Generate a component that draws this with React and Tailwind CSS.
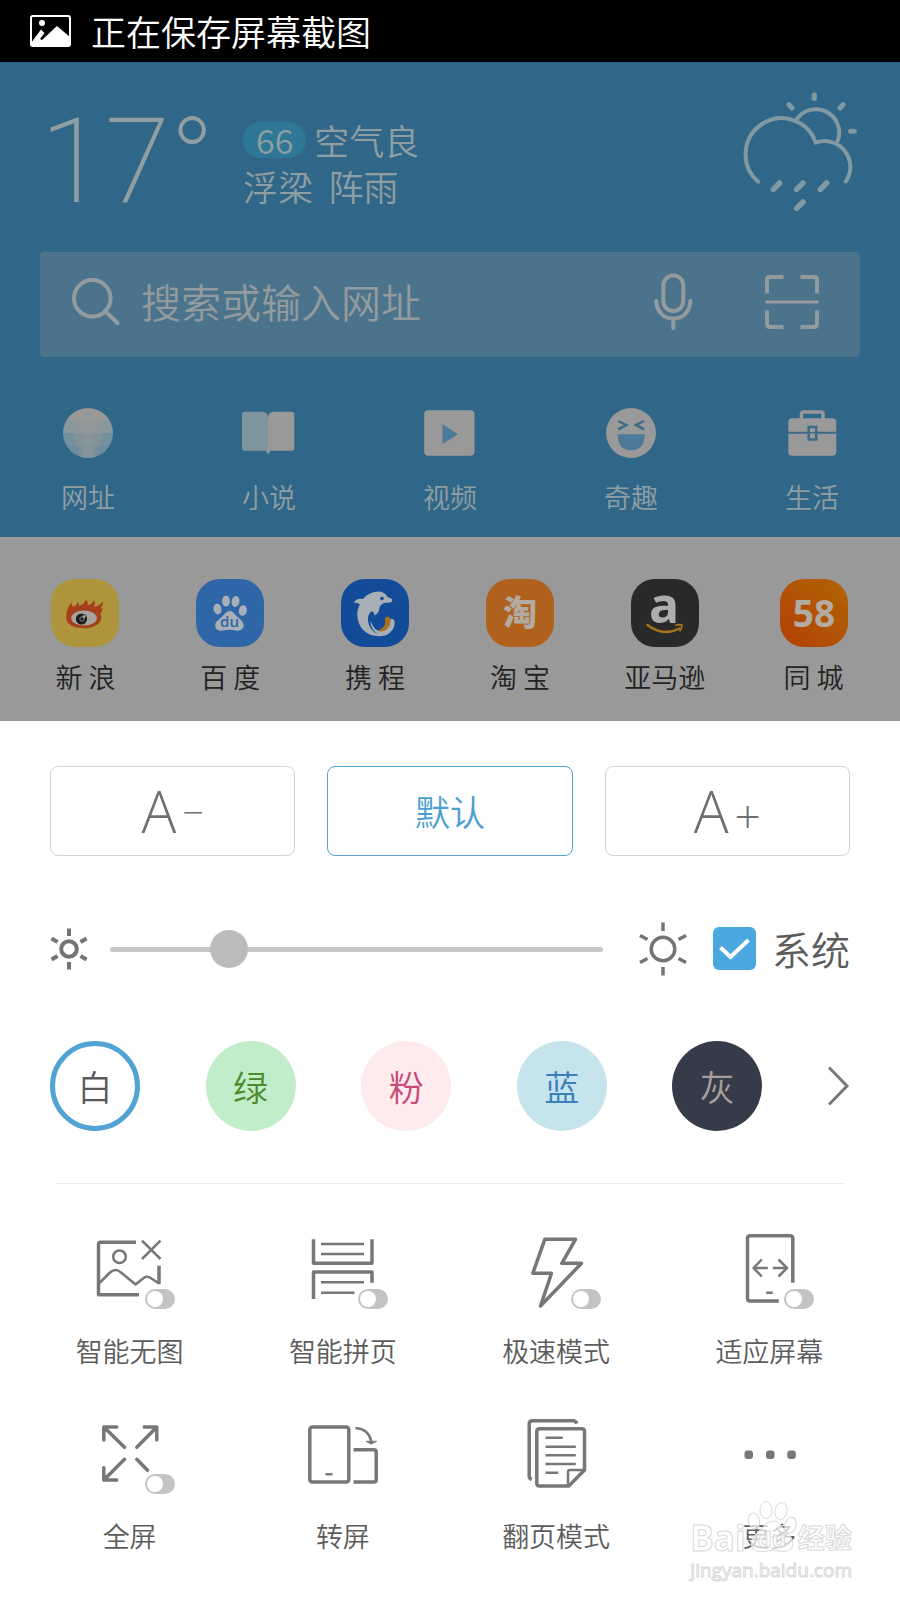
import React from 'react';

const WeatherIcon = () => (
  <svg width="120" height="124" viewBox="0 0 120 124" fill="none" stroke="#8199a3" strokeWidth="4" strokeLinecap="round">
    <path d="M18.3 91.7A36 36 0 1 1 75.7 52.7A25.8 25.8 0 0 1 105.7 91.7" strokeLinejoin="round" />
    <path d="M56.7 29.3A23.3 23.3 0 0 1 97.7 50.7" />
    <path d="M74.3 4.8V8.5M49 14.6L52 18M103 14.6L100 18M110.5 41.3H114.2" strokeWidth="5" />
    <path d="M39.6 93L33.4 99.4M63 93L56.6 99.4M86.6 93L80.4 99.4M63 112L56.6 118.4" strokeWidth="5.5" />
  </svg>
);

const SearchIcon = () => (
  <svg width="50" height="50" viewBox="0 0 50 50" fill="none" stroke="#949b9e" strokeWidth="4" strokeLinecap="round">
    <circle cx="20.3" cy="21.3" r="18.3" />
    <path d="M33.5 34.5L45.5 46" />
  </svg>
);

const MicIcon = () => (
  <svg width="40" height="58" viewBox="0 0 40 58" fill="none" stroke="#949b9e" strokeWidth="4" strokeLinecap="round">
    <rect x="10.3" y="2.5" width="20" height="35.5" rx="10" />
    <path d="M3.2 28C4 39.5 11 45.5 20.3 45.5S36.6 39.5 37.4 28M20.3 46V55" />
  </svg>
);

const ScanIcon = () => (
  <svg width="54" height="54" viewBox="0 0 54 54" fill="none" stroke="#949b9e" strokeWidth="4">
    <path d="M2 18.5V5Q2 2 5 2H18.5M35.5 2H49Q52 2 52 5V18.5M52 35.5V49Q52 52 49 52H35.5M18.5 52H5Q2 52 2 49V35.5" />
    <path d="M1.5 27H52.5" strokeWidth="3" strokeLinecap="round" />
  </svg>
);

const navs = [
  {
    label: '网址',
    icon: (
      <>
        <defs>
          <clipPath id="globe">
            <circle cx="27" cy="26" r="25" />
          </clipPath>
        </defs>
        <g clipPath="url(#globe)">
          <rect width="54" height="14" fill="#979999" />
          <rect y="14" width="54" height="12" fill="#8a979b" />
          <rect y="26" width="54" height="13" fill="#75909d" />
          <rect y="39" width="54" height="13" fill="#6c8b9b" />
          <path d="M13 14H41V26Q40 42 33 52H21Q14 42 13 26Z" fill="#999" opacity=".35" />
          <path d="M22 14H32V52H22Z" fill="#999" opacity=".35" />
        </g>
      </>
    )
  },
  {
    label: '小说',
    icon: (
      <>
        <path d="M0 7.5Q0 4.7 2.8 4.7H20Q26 4.7 26 11V47.5L23.5 43.7H2.8Q0 43.7 0 41Z" fill="#7e959f" />
        <path d="M52.3 7.5Q52.3 4.7 49.5 4.7H32Q26 4.7 26 11V47.5L28.5 43.7H49.5Q52.3 43.7 52.3 41Z" fill="#999" />
      </>
    )
  },
  {
    label: '视频',
    icon: (
      <>
        <rect x="1.2" y="3.3" width="50.3" height="45.4" rx="4" fill="#999" />
        <path d="M19.5 17.3L35 27.2L19.5 37Z" fill="#4b7b98" />
      </>
    )
  },
  {
    label: '奇趣',
    icon: (
      <>
        <circle cx="27" cy="26" r="25" fill="#999" />
        <path d="M14.3 14L22.3 18L14.3 22.3M40 14L32 18L40 22.3" fill="none" stroke="#3d6c88" strokeWidth="2.5" />
        <path d="M13.7 27.3H40.7Q40.7 43.3 27.2 43.3T13.7 27.3Z" fill="#4b7b98" />
      </>
    )
  },
  {
    label: '生活',
    icon: (
      <>
        <path d="M16.5 12V7Q16.5 5 18.5 5H36Q38 5 38 7V12" fill="none" stroke="#999" strokeWidth="3.5" />
        <rect x="3.3" y="11.3" width="48" height="37.4" rx="4" fill="#999" />
        <path d="M3 25.7H51.5" stroke="#3d6c88" strokeWidth="2" />
        <rect x="23.7" y="20" width="7.5" height="12.5" fill="#999" stroke="#3d6c88" strokeWidth="2.5" />
        <path d="M25 25.7H30" stroke="#3d6c88" strokeWidth="1.5" />
      </>
    )
  }
];

const sites = [
  {
    label: '新 浪',
    tile: 'bg-[#ae943c]',
    icon: (
      <>
        <path d="M15.5 41C14.5 34 17 27 20.5 23.5Q20.5 27 22 28Q26 26 27 23Q28.5 25 28 27Q33.5 25 35 20.5Q37.5 23.5 36.5 26.5Q41 25.5 43 21.5Q45 24.5 43 28Q48 27 52 22.5Q52.5 26 49.5 29.5Q52 29.5 52 29Q51 33 49.5 35Q52 41 46.5 45.5Q40 50 30 49Q17.5 48 15.5 41Z" fill="#a5401b" />
        <ellipse cx="33" cy="39" rx="12.8" ry="7.5" fill="#a8a5a0" />
        <circle cx="30.5" cy="40" r="5.6" fill="#1c1c1c" />
        <circle cx="31" cy="40" r="2.2" fill="none" stroke="#888" />
        <circle cx="33" cy="37.5" r="1.5" fill="#a8a5a0" />
      </>
    )
  },
  {
    label: '百 度',
    tile: 'bg-[#2f66a8]',
    icon: (
      <>
        <g fill="#a9afb6">
          <ellipse cx="30" cy="22" rx="3.9" ry="5.5" />
          <ellipse cx="39.5" cy="22.5" rx="3.9" ry="5.5" transform="rotate(10 39.5 22.5)" />
          <ellipse cx="21.5" cy="30" rx="4" ry="5.3" transform="rotate(-12 21.5 30)" />
          <ellipse cx="46.8" cy="31.5" rx="4" ry="5.3" transform="rotate(12 46.8 31.5)" />
          <path d="M34 32Q37 32 39 35.5L45 41Q49 45 47 49Q44.500 52.500 40 51.500Q33.500 50 27 51.500Q21.500 52.500 19.500 48.500Q18 43.500 23 40.500Q26 38 28.500 35Q31 32 34 32Z" />
        </g>
        <text x="33.5" y="48" textAnchor="middle" fontFamily="'Open Sans', sans-serif" fontSize="15" fontWeight="600" fill="#2f66a8">du</text>
      </>
    )
  },
  {
    label: '携 程',
    tile: 'bg-[#124c99]',
    icon: (
      <>
        <path d="M13 24Q15 19 22 20Q28 12.5 38 12.5Q44 13 46.5 18L51 20Q52 23 49 23.5L43 24Q39 26 38.5 29Q38 34.5 33 36.5Q33.5 32 30 32.5Q26.5 36 27 42Q28 51 37 55Q29 50 29.5 42Q33 52 40 52Q48 51 49 41Q51 38 53.5 42Q54.5 49 48.5 54Q42 59 32 56.5Q19 53 16.5 39Q15.5 31 19 25.5Q16 23 13 24Z" fill="#a9afb6" />
        <path d="M44 39Q47 36 49 39Q51 46 45 51Q41 53.5 37 51.5Q43 49 44 45Z" fill="#a9701e" />
        <circle cx="41" cy="19.5" r="1.8" fill="#124c99" />
      </>
    )
  },
  {
    label: '淘 宝',
    tile: 'bg-[#b0611d]',
    icon: (
      <text x="34" y="46" textAnchor="middle" fontFamily="'Noto Sans CJK SC', sans-serif" fontSize="34" fontWeight="900" fill="#b3aaa0">淘</text>
    )
  },
  {
    label: '亚马逊',
    tile: 'bg-[#292929]',
    icon: (
      <>
        <text x="33" y="44" textAnchor="middle" fontFamily="'Open Sans', sans-serif" fontSize="50" fontWeight="700" fill="#adadad">a</text>
        <path d="M16.5 46Q32 58 48.5 49.5" fill="none" stroke="#a8741c" strokeWidth="2.5" strokeLinecap="round" />
        <path d="M44 46.5Q48 45 51 46Q51 49.5 48.5 52.5" fill="none" stroke="#a8741c" strokeWidth="1.8" />
      </>
    )
  },
  {
    label: '同 城',
    tile: 'bg-linear-to-tr from-[#b23f05] to-[#b06404]',
    icon: (
      <text x="34" y="48" textAnchor="middle" fontFamily="'Open Sans', sans-serif" fontSize="37" fontWeight="700" fill="#b3aaa2">58</text>
    )
  }
];

const themes = [
  { label: '白', style: 'border-5 border-[#51a3d3] bg-white text-[#5a5a5a]' },
  { label: '绿', style: 'bg-[#c2edcb] text-[#4b8b2b]' },
  { label: '粉', style: 'bg-[#fdebee] text-[#c94a76]' },
  { label: '蓝', style: 'bg-[#c5e4ec] text-[#3b7fbc]' },
  { label: '灰', style: 'bg-[#353b49] text-[#a79f9c]' }
];

const tools = [
  {
    label: '智能无图',
    toggle: true,
    icon: (
      <>
        <path d="M54 13.3H18.5Q16.5 13.3 16.5 15.3V65.7H57M77 36.7V55" strokeWidth="3.5" />
        <circle cx="37.5" cy="27.7" r="6.3" />
        <path d="M17 54.5L28 43.5Q33.5 38.5 39 43.5L53.5 55.5L61 49.5Q65 46 69.5 49.5L77 54.5M60 11.7L78.5 30M78.5 11.7L60 30" strokeWidth="2.5" />
      </>
    )
  },
  {
    label: '智能拼页',
    toggle: true,
    icon: (
      <>
        <path d="M18.5 10.3V34.3H77V10.3M18.5 70V43H77V53.7" strokeWidth="3.5" />
        <path d="M26 15H69M26 25H69M26 53.3H69M26 63.7H59.5" strokeWidth="2.5" />
      </>
    )
  },
  {
    label: '极速模式',
    toggle: true,
    icon: (
      <path d="M36.8 10.3H67.5L53.8 34.3H73.5L32.5 77L43.5 44.3H24.8Z" strokeWidth="3.5" />
    )
  },
  {
    label: '适应屏幕',
    toggle: true,
    icon: (
      <>
        <path d="M71.8 53.7V9.5Q71.8 6.7 69 6.7H29.3Q26.5 6.7 26.5 9.5V69.2Q26.5 72 29.3 72H57.8" strokeWidth="3.5" />
        <path d="M46.8 39H32.5M40.8 30.5L32.5 39L40.8 47.5M51.8 39H66M57.5 30.5L66 39L57.5 47.5M45.2 63.7H51.8" strokeWidth="2.5" />
      </>
    )
  },
  {
    label: '全屏',
    toggle: true,
    icon: (
      <path d="M42.5 33.3L21.8 13M34.8 13H21.8V26M54.8 33.3L74.8 13M62.2 13H74.8V26M42.5 45.3L21.8 66M34.8 66H21.8V53.7M54.8 45.3L65.5 56.3" strokeWidth="3.5" strokeLinecap="round" />
    )
  },
  {
    label: '转屏',
    icon: (
      <>
        <rect x="14.8" y="13" width="39" height="55" rx="2.5" strokeWidth="3.5" />
        <path d="M58.5 35.7H79Q81.2 35.7 81.2 38V65.7Q81.2 68 79 68H58.5" strokeWidth="3.5" />
        <path d="M30.5 60.3H37.5M60.5 14Q73.5 15 76.2 27" strokeWidth="2.5" />
        <path d="M71 27.3H81.5L76.2 30Z" fill="#777" strokeWidth="1" />
      </>
    )
  },
  {
    label: '翻页模式',
    icon: (
      <>
        <path d="M69 9.5Q67.5 6.7 65 6.7H24.5Q21.2 6.7 21.2 10V62.5Q21.2 64.5 23.8 65.5" strokeWidth="3.5" />
        <path d="M60.8 72H31.5Q28.8 72 28.8 69.2V17.5Q28.8 14.7 31.5 14.7H73.7Q76.5 14.7 76.5 17.5V56Z" strokeWidth="3.5" />
        <path d="M60 71V58Q60 56 62 56H76" strokeWidth="2.5" />
        <path d="M37.5 23.7H54.8M37.5 32.7H67.8M37.5 41.3H67.8M37.5 50H67.8M37.5 58.7H50.2" strokeWidth="2.5" />
      </>
    )
  },
  {
    label: '更多',
    icon: (
      <g fill="#777" stroke="none">
        <rect x="23.5" y="36.5" width="8.5" height="8.5" rx="3" />
        <rect x="45" y="36.5" width="8.5" height="8.5" rx="3" />
        <rect x="66.3" y="36.5" width="8.5" height="8.5" rx="3" />
      </g>
    )
  }
];

const ToolIcon = ({ children }) => (
  <svg width="96" height="84" viewBox="0 0 96 84" fill="none" stroke="#777" strokeWidth="2.5" strokeLinejoin="round">
    {children}
  </svg>
);

const Tool = ({ label, icon, toggle }) => {
  if (!toggle) {
    return (
      <button type="button" className="flex flex-col items-center gap-5">
        <ToolIcon>{icon}</ToolIcon>
        <span>{label}</span>
      </button>
    );
  }
  return (
    <label className="flex flex-col items-center gap-5">
      <span className="relative">
        <ToolIcon>{icon}</ToolIcon>
        <input
          type="checkbox"
          className="absolute right-[3px] bottom-1 h-5 w-[30px] appearance-none rounded-full bg-[#c3c3c3] before:absolute before:top-0.5 before:left-0.5 before:size-4 before:rounded-full before:bg-white"
        />
      </span>
      <span>{label}</span>
    </label>
  );
};

const Watermark = () => (
  <div className="pointer-events-none absolute right-12 bottom-[18px] font-['Open_Sans','Noto_Sans_CJK_SC',sans-serif] text-white/70 [-webkit-text-stroke:1px_#d9d9d9]">
    <div className="flex items-end">
      <span className="text-[35px] leading-10 font-bold">Bai</span>
      <svg width="52" height="54" viewBox="0 0 52 54" fill="#fff" fillOpacity=".7" stroke="#d9d9d9" className="mb-1">
        <ellipse cx="20" cy="10" rx="6" ry="8.5" />
        <ellipse cx="35" cy="11" rx="6" ry="8.5" transform="rotate(10 35 11)" />
        <ellipse cx="8" cy="21" rx="5.5" ry="8" transform="rotate(-12 8 21)" />
        <ellipse cx="44.5" cy="25" rx="5.5" ry="8" transform="rotate(12 44.5 25)" />
        <path d="M27 21Q33 21 37 28L45 37Q49 44 45 49Q40 53 34 51Q27 49 20 51Q12 53 7 49Q3 43 8 36L17 27Q21 21 27 21Z" />
        <text x="26" y="47" textAnchor="middle" fontSize="22" fontWeight="700">du</text>
      </svg>
      <span className="text-[27px] leading-10 font-bold">经验</span>
    </div>
    <div className="text-[19px] leading-6 font-normal">jingyan.baidu.com</div>
  </div>
);

const App = () => (
  <div className="relative min-h-screen bg-white font-['Noto_Sans_CJK_SC',sans-serif] font-[350]">
    {/* Status bar */}
    <div className="flex h-[62px] items-center gap-5 bg-black px-[30px] text-white">
      <svg width="41" height="32" viewBox="0 0 41 32">
        <rect x="1" y="1" width="39" height="30" rx="2" fill="none" stroke="#fff" strokeWidth="2" />
        <circle cx="12" cy="8" r="3" fill="#fff" />
        <path d="M1 28L11 14.5L14.5 18L10 24L12 25L27 11L40 22V31H1Z" fill="#fff" />
      </svg>
      <span className="text-[35px]">正在保存屏幕截图</span>
    </div>

    {/* Weather, search and shortcuts, dimmed behind the sheet */}
    <header className="bg-[#306788] pb-[22px] text-[#8f9ea3]">
      <div className="flex h-[190px] items-start px-10 pt-7">
        <div className="mt-1.5 w-[203px] font-[Roboto,sans-serif] text-[118px] leading-[132px] font-extralight">17°</div>
        <div className="mt-[27px] text-[35px] leading-[46px]">
          <div className="flex items-center gap-2">
            <span className="rounded-full bg-[#2e7896] px-[13px] text-[34px] leading-9">66</span>
            <span>空气良</span>
          </div>
          <div>浮梁&nbsp;&nbsp;阵雨</div>
        </div>
        <div className="ml-auto">
          <WeatherIcon />
        </div>
      </div>

      <div className="mx-10 flex h-[105px] items-center rounded bg-[#4b748c] pr-[41px] pb-1.5 pl-8">
        <SearchIcon />
        <input
          type="text"
          aria-label="搜索或输入网址"
          placeholder="搜索或输入网址"
          className="ml-[19px] min-w-0 flex-1 pb-0.5 text-[40px] outline-none placeholder:text-[#949b9e]"
        />
        <button type="button" aria-label="语音" className="mr-[72px]">
          <MicIcon />
        </button>
        <button type="button" aria-label="扫码">
          <ScanIcon />
        </button>
      </div>

      <nav className="mt-[50px] flex justify-between px-[61px] text-[27px] leading-9">
        {navs.map((item) => (
          <a key={item.label} href="#" className="flex flex-col items-center gap-5">
            <svg width="54" height="52" viewBox="0 0 54 52">
              {item.icon}
            </svg>
            {item.label}
          </a>
        ))}
      </nav>
    </header>

    {/* Sites */}
    <div className="grid h-[184px] grid-cols-[145fr_145fr_145fr_145fr_145fr_153fr] bg-[#999] pt-[42px] pr-[10px] pl-[13px] text-[27px] leading-9 text-[#222]">
      {sites.map((site) => (
        <a key={site.label} href="#" className="flex flex-col items-center gap-3">
          <span className={`rounded-3xl ${site.tile}`}>
            <svg width="68" height="68" viewBox="0 0 68 68" className="overflow-visible">
              {site.icon}
            </svg>
          </span>
          {site.label}
        </a>
      ))}
    </div>

    {/* Settings sheet */}
    <div className="pt-[45px] pb-[46px] text-[#5c5c5c]">
      <div className="mx-[50px] grid h-[90px] grid-cols-3 gap-8">
        <button type="button" className="flex items-center justify-center rounded-lg border border-[#d2d2d2] font-['Open_Sans',sans-serif] text-[58px] leading-none text-[#6f6f6f]">
          A<span className="ml-1.5 text-[38px]">−</span>
        </button>
        <button type="button" className="rounded-lg border border-[#51a3d3] text-[35px] text-[#4a9fd0]">
          默认
        </button>
        <button type="button" className="rounded-lg border border-[#d2d2d2] font-['Open_Sans',sans-serif] text-[58px] leading-none text-[#6f6f6f]">
          A<span className="ml-1.5 text-[46px]">+</span>
        </button>
      </div>

      {/* Brightness */}
      <div className="mx-[50px] mt-[66px] flex h-[54px] items-center">
        <svg width="38" height="42" viewBox="0 0 38 42" fill="none" stroke="#747474" strokeWidth="4">
          <circle cx="19" cy="21" r="7.8" />
          <path d="M19 .5V8M19 34V41.5M1.5 10.5L7.5 14M36.5 10.5L30.5 14M1.5 31.5L7.5 28M36.5 31.5L30.5 28" />
        </svg>
        <input
          type="range"
          aria-label="亮度"
          defaultValue="22"
          className="mr-9 ml-[22px] h-[5px] min-w-0 flex-1 appearance-none rounded-full bg-[#c6c6c6] [&::-webkit-slider-thumb]:size-[38px] [&::-webkit-slider-thumb]:appearance-none [&::-webkit-slider-thumb]:rounded-full [&::-webkit-slider-thumb]:bg-[#bbb]"
        />
        <svg width="48" height="54" viewBox="0 0 48 54" fill="none" stroke="#747474" strokeWidth="3.5">
          <circle cx="24" cy="27" r="11.8" />
          <path d="M24 .5V9M24 45V53.5M1 13.5L8.5 17.5M47 13.5L39.5 17.5M1 40.5L8.5 36.5M47 40.5L39.5 36.5" />
        </svg>
        <label className="ml-[26px] flex items-center gap-4 pb-0.5 text-[39px] leading-[52px]">
          <span className="relative size-[43px]">
            <input type="checkbox" defaultChecked className="block size-full appearance-none rounded-md bg-[#4aa8df]" />
            <svg className="pointer-events-none absolute inset-0" width="43" height="43" viewBox="0 0 43 43" fill="none" stroke="#fff" strokeWidth="4">
              <path d="M7.5 20.5L17.5 30L35.5 13" />
            </svg>
          </span>
          系统
        </label>
      </div>

      {/* Page colours */}
      <div className="mx-[50px] mt-[65px] flex items-center justify-between">
        {themes.map((theme) => (
          <button key={theme.label} type="button" className={`size-[90px] rounded-full text-[35px] ${theme.style}`}>
            {theme.label}
          </button>
        ))}
        <button type="button" aria-label="更多颜色">
          <svg width="22" height="40" viewBox="0 0 22 40" fill="none" stroke="#777" strokeWidth="3">
            <path d="M1 1.5L19 20L1 38.5" />
          </svg>
        </button>
      </div>

      <hr className="mx-14 mt-[52px] border-[#ececec]" />

      {/* Tools */}
      <div className="mt-[45px] grid grid-cols-4 gap-y-[45px] pr-6 pl-[23px] text-[27px] leading-9">
        {tools.map((tool) => (
          <Tool key={tool.label} {...tool} />
        ))}
      </div>
    </div>

    <Watermark />
  </div>
);

export default App;
